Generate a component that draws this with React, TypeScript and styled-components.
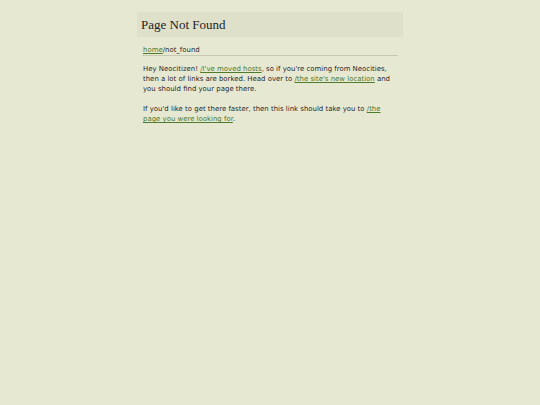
import React from "react";
import styled, { createGlobalStyle } from "styled-components";

const Global = createGlobalStyle`
  html, body { margin: 0; padding: 0; background: #e7e8d1; }
  body { font-family: "DejaVu Sans", Verdana, sans-serif; color: #2a2a2a; }
`;

const Page = styled.div`
  width: 266px;
  margin: 12px auto 0;
`;

const Header = styled.header`
  background: #dfe0c9;
  height: 25px;
  padding-left: 4px;
  display: flex;
  align-items: center;
`;

const Title = styled.h1`
  margin: 0;
  font-family: "Liberation Serif", "Times New Roman", serif;
  font-weight: normal;
  font-size: 13px;
  color: #222;
`;

const Content = styled.main`
  padding: 0 5px 0 5px;
  font-size: 6.95px;
  line-height: 10px;
`;

const Crumbs = styled.nav`
  margin-top: 8px;
  padding: 0 1px 0;
  border-bottom: 1px solid #c8c9b2;
  line-height: 10px;
`;

const Link = styled.a`
  color: #4d7a2b;
  text-decoration: underline;
`;

const Para = styled.p`
  margin: 8px 1px 0;

  & + & {
    margin-top: 10px;
  }
`;

export default function App() {
  return (
    <>
      <Global />
      <Page>
        <Header>
          <Title>Page Not Found</Title>
        </Header>
        <Content>
          <Crumbs>
            <Link href="#">home</Link>/not_found
          </Crumbs>
          <Para>
            Hey Neocitizen! <Link href="#">/I've moved hosts</Link>, so if you're coming from Neocities,
            then a lot of links are borked. Head over to <Link href="#">/the site's new location</Link> and
            you should find your page there.
          </Para>
          <Para>
            If you'd like to get there faster, then this link should take you to{" "}
            <Link href="#">/the page you were looking for</Link>.
          </Para>
        </Content>
      </Page>
    </>
  );
}
